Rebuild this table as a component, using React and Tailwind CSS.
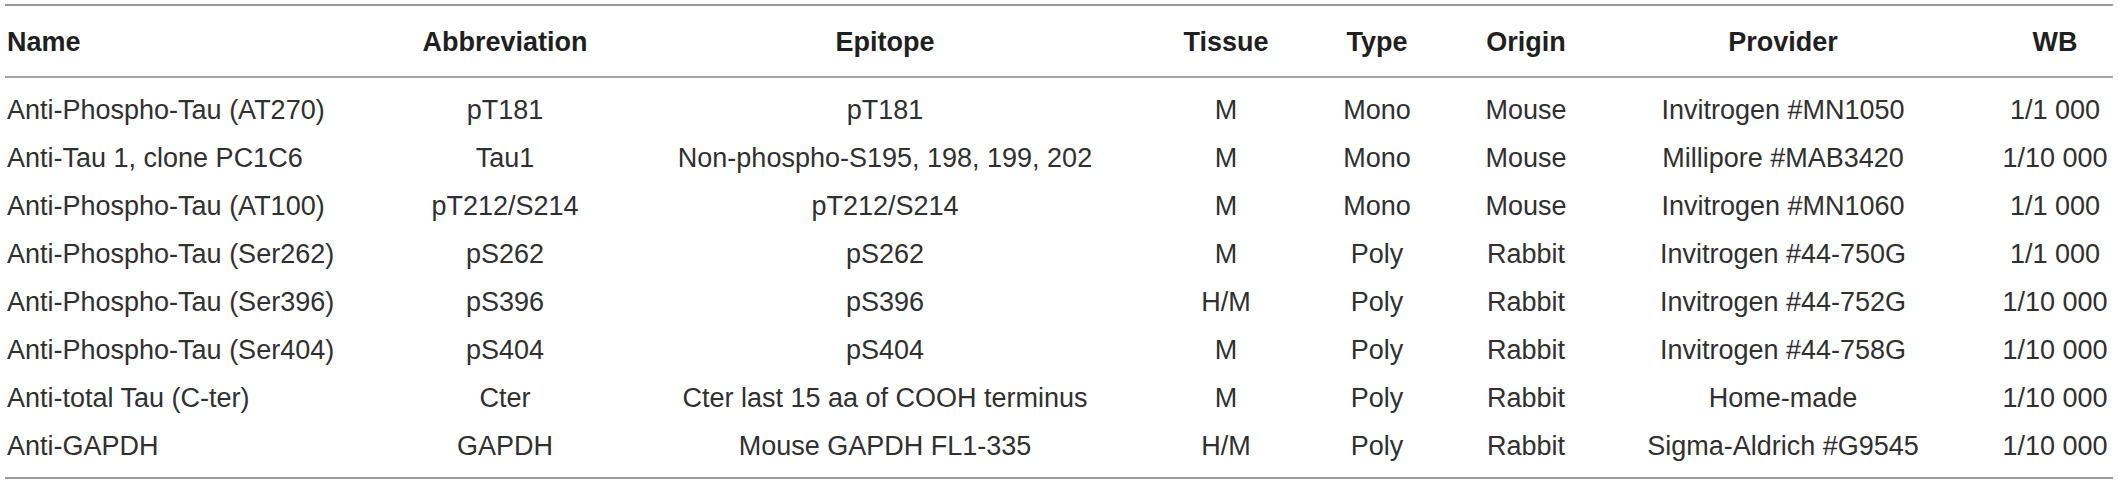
import React from 'react';

const rows = [
  ['Anti-Phospho-Tau (AT270)', 'pT181', 'pT181', 'M', 'Mono', 'Mouse', 'Invitrogen #MN1050', '1/1 000'],
  ['Anti-Tau 1, clone PC1C6', 'Tau1', 'Non-phospho-S195, 198, 199, 202', 'M', 'Mono', 'Mouse', 'Millipore #MAB3420', '1/10 000'],
  ['Anti-Phospho-Tau (AT100)', 'pT212/S214', 'pT212/S214', 'M', 'Mono', 'Mouse', 'Invitrogen #MN1060', '1/1 000'],
  ['Anti-Phospho-Tau (Ser262)', 'pS262', 'pS262', 'M', 'Poly', 'Rabbit', 'Invitrogen #44-750G', '1/1 000'],
  ['Anti-Phospho-Tau (Ser396)', 'pS396', 'pS396', 'H/M', 'Poly', 'Rabbit', 'Invitrogen #44-752G', '1/10 000'],
  ['Anti-Phospho-Tau (Ser404)', 'pS404', 'pS404', 'M', 'Poly', 'Rabbit', 'Invitrogen #44-758G', '1/10 000'],
  ['Anti-total Tau (C-ter)', 'Cter', 'Cter last 15 aa of COOH terminus', 'M', 'Poly', 'Rabbit', 'Home-made', '1/10 000'],
  ['Anti-GAPDH', 'GAPDH', 'Mouse GAPDH FL1-335', 'H/M', 'Poly', 'Rabbit', 'Sigma-Aldrich #G9545', '1/10 000'],
];

const headers = ['Name', 'Abbreviation', 'Epitope', 'Tissue', 'Type', 'Origin', 'Provider', 'WB'];

// one grid template shared by header and body so columns line up
const cols = 'grid grid-cols-[385px_230px_530px_152px_150px_148px_366px_147px]';

function Cell({ i, children }) {
  if (i === 0) return <div className="pl-[2px] whitespace-nowrap">{children}</div>;
  if (i === 7) return <div className="pl-[31px] text-center whitespace-nowrap">{children}</div>;
  return <div className="text-center whitespace-nowrap">{children}</div>;
}

export default function App() {
  return (
    <div className="w-[2118px] h-[485px] bg-white pt-[4px] pl-[5px] font-['Liberation_Sans',Arial,sans-serif] text-[27px]">
      <div className="w-[2108px] border-t-2 border-b-2 border-[#9a9a9a]">
        {/* Header */}
        <div className={`${cols} h-[72px] items-center pt-[2px] border-b-2 border-[#a3a3a3] font-bold text-[#1f1f1f]`}>
          {headers.map((h, i) => (
            <Cell key={h} i={i}>{h}</Cell>
          ))}
        </div>

        {/* Body */}
        <div className="pt-[8px] pb-[7px] text-[#303030]">
          {rows.map((r) => (
            <div key={r[0]} className={`${cols} h-[48px] items-center`}>
              {r.map((c, i) => (
                <Cell key={i} i={i}>{c}</Cell>
              ))}
            </div>
          ))}
        </div>
      </div>
    </div>
  );
}
